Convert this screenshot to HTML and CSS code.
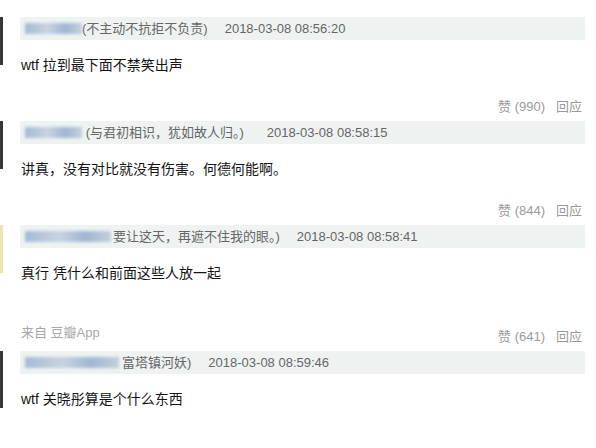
FILE: index.html
```html
<!DOCTYPE html>
<html lang="zh-CN">
<head>
    <meta charset="UTF-8">
    <meta name="viewport" content="width=device-width, initial-scale=1.0">
    <title>评论</title>
    <link rel="stylesheet" href="styles.css">
</head>
<body>
    <div class="list">
        <!-- 评论 1 -->
        <div class="comment">
            <div class="avatar"></div>
            <div class="main">
                <div class="meta">
                    <span class="name name-a"></span><span class="sign">(不主动不抗拒不负责)</span><span class="time">2018-03-08 08:56:20</span>
                </div>
                <p class="text">wtf 拉到最下面不禁笑出声</p>
                <div class="actions">
                    <span class="vote">赞 (990)</span><span class="reply">回应</span>
                </div>
            </div>
        </div>

        <!-- 评论 2 -->
        <div class="comment">
            <div class="avatar"></div>
            <div class="main">
                <div class="meta">
                    <span class="name name-a"></span> <span class="sign">(与君初相识，犹如故人归。)</span><span class="time time-wide">2018-03-08 08:58:15</span>
                </div>
                <p class="text">讲真，没有对比就没有伤害。何德何能啊。</p>
                <div class="actions">
                    <span class="vote">赞 (844)</span><span class="reply">回应</span>
                </div>
            </div>
        </div>

        <!-- 评论 3 -->
        <div class="comment">
            <div class="avatar avatar-light"></div>
            <div class="main">
                <div class="meta">
                    <span class="name name-c"></span><span class="sign">要让这天，再遮不住我的眼。)</span><span class="time">2018-03-08 08:58:41</span>
                </div>
                <p class="text">真行 凭什么和前面这些人放一起</p>
                <div class="actions actions-from">
                    <span class="from">来自 豆瓣App</span>
                    <span><span class="vote">赞 (641)</span><span class="reply">回应</span></span>
                </div>
            </div>
        </div>

        <!-- 评论 4 -->
        <div class="comment">
            <div class="avatar avatar-tall"></div>
            <div class="main">
                <div class="meta">
                    <span class="name name-d"></span><span class="sign">富塔镇河妖)</span><span class="time">2018-03-08 08:59:46</span>
                </div>
                <p class="text">wtf 关晓彤算是个什么东西</p>
            </div>
        </div>
    </div>
</body>
</html>
```

FILE: styles.css
```css
/* 基本样式 */
* {
    margin: 0;
    padding: 0;
    box-sizing: border-box;
}

body {
    font-family: "Liberation Sans", "Noto Sans CJK SC", sans-serif;
    background-color: #fff;
    color: #111;
    width: 596px;
    height: 448px;
    overflow: hidden;
}

/* 评论列表 */
.list {
    padding: 17px 11px 0 0;
}

.comment {
    display: flex;
    gap: 17px;
    margin-bottom: 3px;
}

.avatar {
    flex: none;
    width: 3px;
    height: 48px;
    background-color: #3a3634;
}

.avatar-light {
    background-color: #efe4b0;
}

.avatar-tall {
    height: 57px;
}

.main {
    flex: 1;
}

/* 用户信息栏 */
.meta {
    height: 23px;
    line-height: 23px;
    padding-left: 5px;
    background-color: #eef3f2;
    font-size: 13px;
    color: #666;
    white-space: nowrap;
}

.name {
    display: inline-block;
    height: 11px;
    vertical-align: -1px;
    background: linear-gradient(90deg, #a4bbd6, #c8d3e0 40%, #9fb6d3 70%, #c3cfdd);
    filter: blur(1.4px);
}

.name-a {
    width: 57px;
}

.name-c {
    width: 86px;
    margin-right: 2px;
}

.name-d {
    width: 94px;
    margin-right: 3px;
}

.time {
    margin-left: 17px;
}

.time-wide {
    margin-left: 23px;
}

/* 评论内容 */
.text {
    margin-top: 14px;
    padding-left: 1px;
    line-height: 22px;
    font-size: 14px;
    color: #141414;
}

/* 赞与回应 */
.actions {
    margin-top: 20px;
    padding-right: 3px;
    line-height: 22px;
    text-align: right;
    font-size: 13px;
    color: #9a9a9a;
}

.reply {
    margin-left: 11px;
}

.actions-from {
    display: flex;
    justify-content: space-between;
    align-items: flex-end;
    margin-top: 42px;
    text-align: left;
}

.from {
    line-height: 14px;
    margin-bottom: 8px;
    padding-left: 1px;
    color: #a8a8a8;
}
```
